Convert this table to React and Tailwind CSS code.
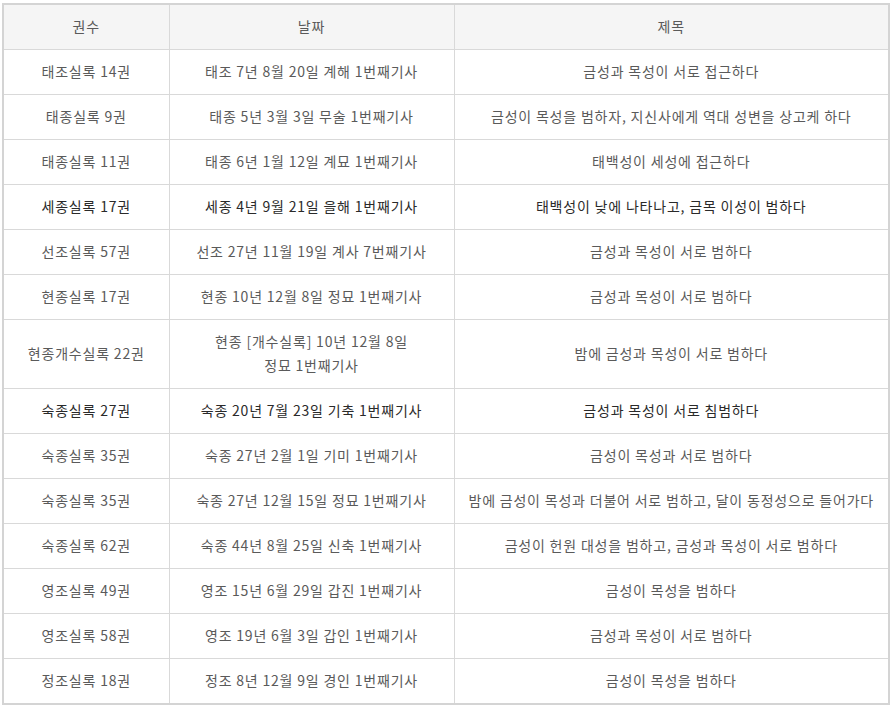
const rows = [
  ["태조실록 14권", "태조 7년 8월 20일 계해 1번째기사", "금성과 목성이 서로 접근하다"],
  ["태종실록 9권", "태종 5년 3월 3일 무술 1번째기사", "금성이 목성을 범하자, 지신사에게 역대 성변을 상고케 하다"],
  ["태종실록 11권", "태종 6년 1월 12일 계묘 1번째기사", "태백성이 세성에 접근하다"],
  ["세종실록 17권", "세종 4년 9월 21일 을해 1번째기사", "태백성이 낮에 나타나고, 금목 이성이 범하다", true],
  ["선조실록 57권", "선조 27년 11월 19일 계사 7번째기사", "금성과 목성이 서로 범하다"],
  ["현종실록 17권", "현종 10년 12월 8일 정묘 1번째기사", "금성과 목성이 서로 범하다"],
  ["현종개수실록 22권", "현종 [개수실록] 10년 12월 8일\n정묘 1번째기사", "밤에 금성과 목성이 서로 범하다"],
  ["숙종실록 27권", "숙종 20년 7월 23일 기축 1번째기사", "금성과 목성이 서로 침범하다", true],
  ["숙종실록 35권", "숙종 27년 2월 1일 기미 1번째기사", "금성이 목성과 서로 범하다"],
  ["숙종실록 35권", "숙종 27년 12월 15일 정묘 1번째기사", "밤에 금성이 목성과 더불어 서로 범하고, 달이 동정성으로 들어가다"],
  ["숙종실록 62권", "숙종 44년 8월 25일 신축 1번째기사", "금성이 헌원 대성을 범하고, 금성과 목성이 서로 범하다"],
  ["영조실록 49권", "영조 15년 6월 29일 갑진 1번째기사", "금성이 목성을 범하다"],
  ["영조실록 58권", "영조 19년 6월 3일 갑인 1번째기사", "금성과 목성이 서로 범하다"],
  ["정조실록 18권", "정조 8년 12월 9일 경인 1번째기사", "금성이 목성을 범하다"],
];

// ── Records table ─────────────────────────────────────────
export default function App() {
  return (
    <div className="bg-white pl-[2px] pt-[3px] font-['Noto_Sans_CJK_KR',sans-serif] text-[14px] leading-[24px] tracking-[0.8px] text-[#5a5a5a]">
      <table className="w-[888px] table-fixed border-collapse border-2 border-[#d4d4d4] text-center">
        <colgroup>
          <col className="w-[166px]" />
          <col className="w-[285px]" />
          <col />
        </colgroup>
        <thead>
          <tr className="bg-[#f5f5f5]">
            <th className="border border-[#d9d9d9] pt-[9px] pb-[11px] font-normal">권수</th>
            <th className="border border-[#d9d9d9] pt-[9px] pb-[11px] font-normal">날짜</th>
            <th className="border border-[#d9d9d9] pt-[9px] pb-[11px] font-normal">제목</th>
          </tr>
        </thead>
        <tbody>
          {rows.map(([vol, date, title, dark], i) => (
            <tr key={i} className={dark ? "text-[#2a2a2a]" : ""}>
              <td className="border border-[#d9d9d9] pt-[9px] pb-[11px]">{vol}</td>
              <td className="whitespace-pre-line border border-[#d9d9d9] pt-[9px] pb-[11px]">{date}</td>
              <td className="border border-[#d9d9d9] pt-[9px] pb-[11px]">{title}</td>
            </tr>
          ))}
        </tbody>
      </table>
    </div>
  );
}
